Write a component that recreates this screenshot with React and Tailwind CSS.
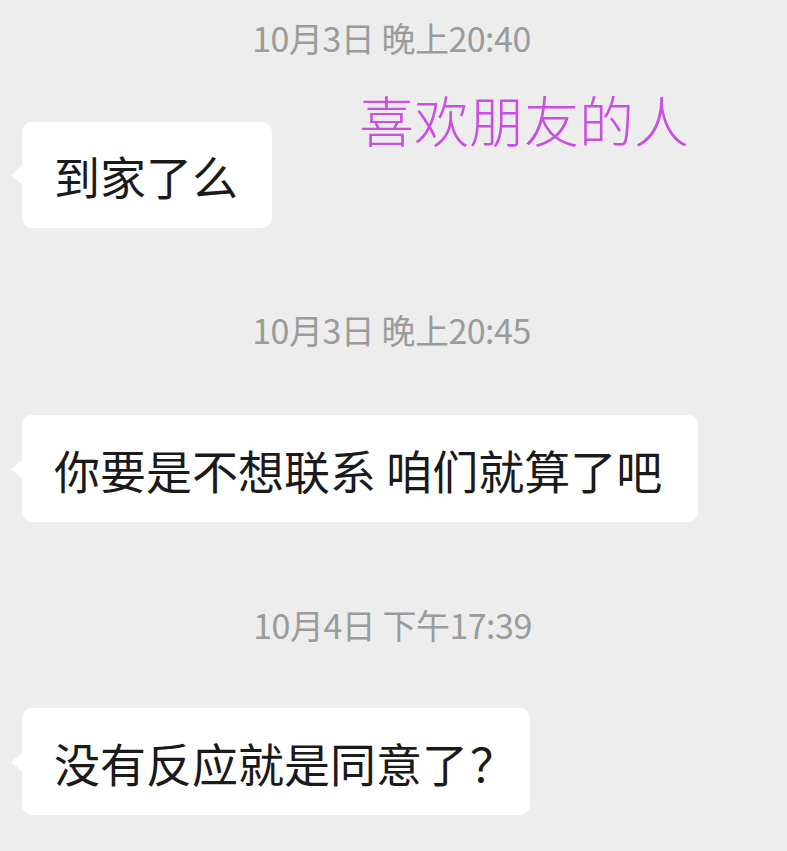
import React from "react";

const ff = { fontFamily: '"Noto Sans CJK SC", "Noto Sans", sans-serif' };

function Stamp({ children, className = "" }) {
  return (
    <div className={"h-[40px] flex items-center justify-center text-[34px] text-[#9b9b9b] tracking-[-0.5px] leading-none " + className}>
      {children}
    </div>
  );
}

function Bubble({ children, className = "" }) {
  return (
    <div className={"relative self-start ml-[22px] h-[106px] bg-white rounded-[10px] flex items-center pl-[32px] text-[46px] text-[#1a1a1a] leading-none " + className}>
      <div className="absolute left-[-11px] top-1/2 -translate-y-1/2 w-0 h-0 border-y-[10px] border-y-transparent border-r-[12px] border-r-white" />
      {children}
    </div>
  );
}

export default function App() {
  return (
    <div className="relative w-[787px] h-[851px] bg-[#ededed] overflow-hidden flex flex-col" style={ff}>
      <Stamp className="mt-[18px] pr-[4px]">10月3日 晚上20:40</Stamp>
      <Bubble className="mt-[64px] pr-[34px]">到家了么</Bubble>
      <div className="absolute left-[359px] top-[91px] text-[55px] font-light text-[#c94ee3] leading-none">喜欢朋友的人</div>
      <Stamp className="mt-[82px] pr-[4px]">10月3日 晚上20:45</Stamp>
      <Bubble className="mt-[65px] h-[107px] pr-[36px]">你要是不想联系 咱们就算了吧</Bubble>
      <Stamp className="mt-[83px] pr-[2px]">10月4日 下午17:39</Stamp>
      <Bubble className="mt-[63px] h-[107px] pr-[14px]">
        <span>没有反应就是同意了</span>
        <span className="ml-[2px]">？</span>
      </Bubble>
    </div>
  );
}
